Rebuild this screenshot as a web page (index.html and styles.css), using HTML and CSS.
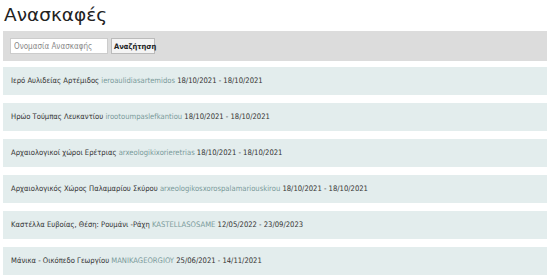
FILE: index.html
```html
<!DOCTYPE html>
<html lang="el">
<head>
  <meta charset="UTF-8">
  <title>Ανασκαφές</title>
  <link rel="stylesheet" href="styles.css">
</head>
<body>
  <div class="container">
    <h1>Ανασκαφές</h1>

    <form class="search-bar">
      <input type="text" placeholder="Ονομασία Ανασκαφής">
      <button type="submit">Αναζήτηση</button>
    </form>

    <ul class="dig-list">
      <li class="dig">Ιερό Αυλιδείας Αρτέμιδος <span class="code">ieroaulidiasartemidos</span> 18/10/2021 - 18/10/2021</li>
      <li class="dig">Ηρώο Τούμπας Λευκαντίου <span class="code">irootoumpaslefkantiou</span> 18/10/2021 - 18/10/2021</li>
      <li class="dig">Αρχαιολογικοί χώροι Ερέτριας <span class="code">arxeologikixorieretrias</span> 18/10/2021 - 18/10/2021</li>
      <li class="dig">Αρχαιολογικός Χώρος Παλαμαρίου Σκύρου <span class="code">arxeologikosxorospalamariouskirou</span> 18/10/2021 - 18/10/2021</li>
      <li class="dig">Καστέλλα Ευβοίας, Θέση: Ρουμάνι -Ράχη <span class="code">KASTELLASOSAME</span> 12/05/2022 - 23/09/2023</li>
      <li class="dig">Μάνικα - Οικόπεδο Γεωργίου <span class="code">MANIKAGEORGIOY</span> 25/06/2021 - 14/11/2021</li>
    </ul>
  </div>
</body>
</html>
```

FILE: styles.css
```css
* {
  margin: 0;
  padding: 0;
  box-sizing: border-box;
}

body {
  font-family: 'DejaVu Sans Condensed', 'DejaVu Sans', Verdana, sans-serif;
  color: #333;
  background: #fff;
}

.container {
  padding: 3px 3px 0;
}

h1 {
  font-family: 'DejaVu Sans', Verdana, sans-serif;
  font-size: 18.5px;
  font-weight: normal;
  line-height: 24px;
  margin: 0 0 4px 1px;
  color: #222;
}

.search-bar {
  display: flex;
  align-items: center;
  gap: 3px;
  background: #dcdcdc;
  padding: 7px 7px;
  margin-bottom: 6px;
}

.search-bar input {
  width: 98px;
  height: 16px;
  border: 1px solid #ccc;
  padding: 0 3px;
  font-family: inherit;
  font-size: 8px;
  color: #333;
}

.search-bar input::placeholder {
  color: #888;
}

.search-bar button {
  width: 44px;
  height: 16px;
  padding: 0 2px;
  border: 1px solid #bbb;
  background: #f4f4f4;
  font-family: inherit;
  font-size: 7.5px;
  font-weight: bold;
  color: #222;
}

.dig-list {
  list-style: none;
  display: flex;
  flex-direction: column;
  gap: 8px;
}

.dig {
  background: #e3eded;
  height: 28px;
  line-height: 28px;
  padding: 0 8px;
  font-size: 7.6px;
}

.dig .code {
  color: #7a9a9a;
}
```
